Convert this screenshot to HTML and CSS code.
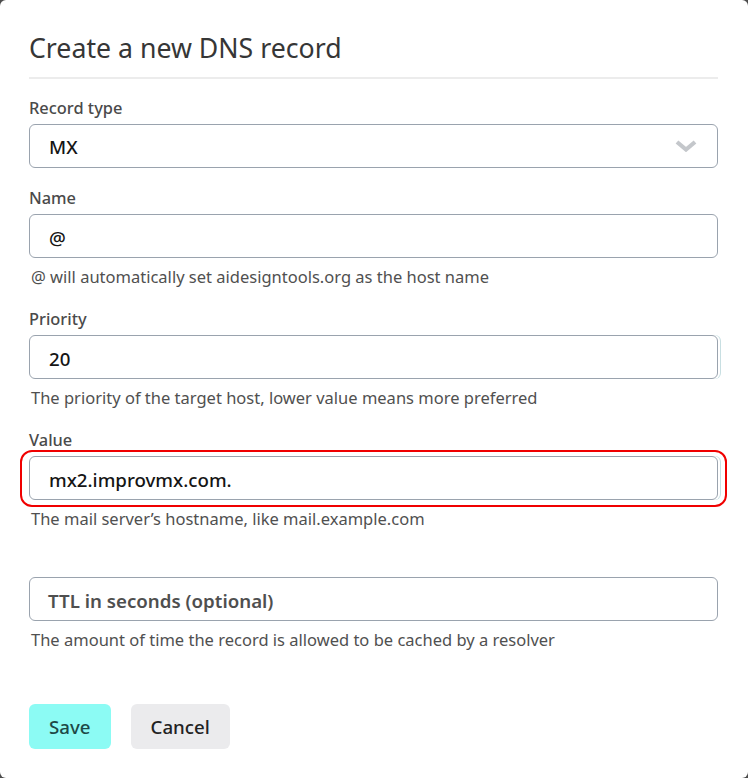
FILE: index.html
```html
<!DOCTYPE html>
<html lang="en">
<head>
<meta charset="utf-8">
<title>Create a new DNS record</title>
<link rel="stylesheet" href="styles.css">
</head>
<body>
<div class="modal">
  <h1 class="title">Create a new DNS record</h1>
  <hr class="divider">

  <div class="field">
    <div class="label">Record type</div>
    <div class="control select">
      <span class="value">MX</span>
      <svg class="chevron" width="22" height="12" viewBox="0 0 22 12"><polyline points="2,2 11,9.5 20,2" fill="none" stroke="#c4c7cb" stroke-width="4.2" stroke-linejoin="miter"/></svg>
    </div>
  </div>

  <div class="field">
    <div class="label">Name</div>
    <div class="control"><span class="value">@</span></div>
    <div class="help">@ will automatically set aidesigntools.org as the host name</div>
  </div>

  <div class="field">
    <div class="label">Priority</div>
    <div class="control ghost-edge"><span class="value">20</span></div>
    <div class="help">The priority of the target host, lower value means more preferred</div>
  </div>

  <div class="field">
    <div class="label">Value</div>
    <div class="highlight">
      <div class="control ghost-edge"><span class="value">mx2.improvmx.com.</span></div>
    </div>
    <div class="help">The mail server’s hostname, like mail.example.com</div>
  </div>

  <div class="field">
    <div class="label"></div>
    <div class="control"><span class="placeholder">TTL in seconds (optional)</span></div>
    <div class="help">The amount of time the record is allowed to be cached by a resolver</div>
  </div>

  <div class="actions">
    <button class="btn btn-save">Save</button>
    <button class="btn btn-cancel">Cancel</button>
  </div>
</div>
</body>
</html>
```

FILE: styles.css
```css
html, body {
  margin: 0;
  padding: 0;
}
body {
  background: #4d4d4d;
  font-family: "Noto Sans", "Open Sans", sans-serif;
  width: 748px;
  height: 778px;
  overflow: hidden;
}
.modal {
  box-sizing: border-box;
  width: 748px;
  height: 778px;
  background: #ffffff;
  border-radius: 6px;
  padding: 30px 30px 0 29px;
}
.title {
  margin: 0;
  font-size: 26.7px;
  line-height: 36px;
  font-weight: 400;
  color: #363636;
}
.divider {
  border: 0;
  height: 2px;
  background: #ececec;
  margin: 11px 0 21px 0;
}
.field {
  margin-bottom: 22px;
}
.label {
  height: 24px;
  font-size: 16.4px;
  line-height: 16px;
  font-weight: 500;
  color: #4a4a4a;
}
.control {
  box-sizing: border-box;
  height: 44px;
  border: 1px solid #9aa3ae;
  border-radius: 6px;
  display: flex;
  align-items: center;
  padding: 2px 18px 0 19px;
  background: #fff;
}
.ghost-edge {
  box-shadow: 2px 0 0 #ffffff, 3px 0 0 #c8dfe2;
}
.value {
  font-size: 18.7px;
  font-weight: 500;
  color: #151515;
}
.placeholder {
  font-size: 18.7px;
  font-weight: 600;
  color: #4f4f4f;
  margin-left: -1px;
}
.select {
  justify-content: space-between;
  padding-top: 0;
}
.chevron {
  display: block;
  margin-right: 2px;
}
.help {
  margin-top: 7px;
  font-size: 16.5px;
  line-height: 24px;
  color: #505050;
  padding-left: 2px;
}
.highlight {
  position: relative;
}
.highlight::after {
  content: "";
  position: absolute;
  top: -6px;
  bottom: -7px;
  left: -9px;
  right: -9px;
  border: 2px solid #f00000;
  border-radius: 12px;
  pointer-events: none;
}
.actions {
  display: flex;
  gap: 20px;
  margin-top: 52px;
}
.btn {
  height: 45px;
  border: 0;
  border-radius: 6px;
  font-family: inherit;
  font-size: 18.7px;
  font-weight: 500;
  padding: 0 20px;
}
.btn-save {
  background: #8cfbf4;
  color: #1e4947;
}
.btn-cancel {
  background: #ebebed;
  color: #222222;
}
```
